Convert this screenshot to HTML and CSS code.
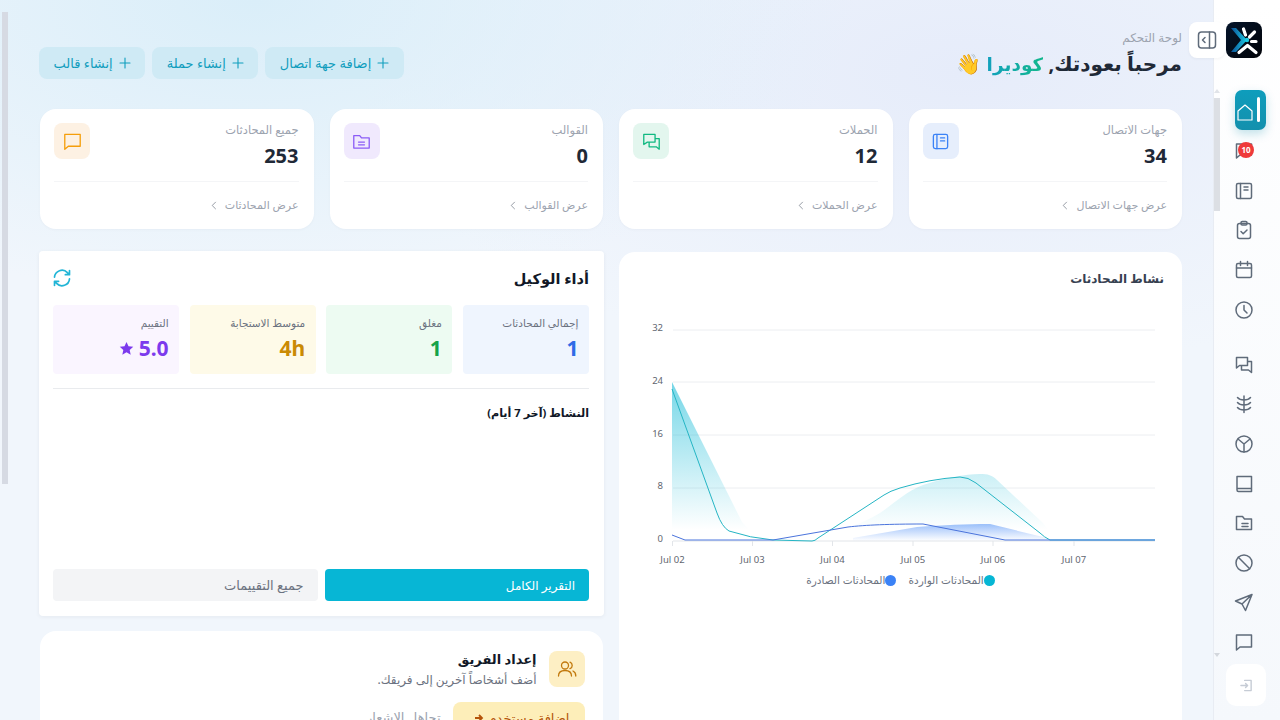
FILE: index.html
```html
<!DOCTYPE html>
<html lang="ar" dir="rtl">
<head>
    <meta charset="UTF-8">
    <meta name="viewport" content="width=device-width, initial-scale=1.0">
    <title>لوحة التحكم</title>
    <link rel="stylesheet" href="styles.css">
</head>
<body>
    <!-- Sidebar -->
    <aside class="sidebar">
        <div class="sidebar-top">
            <button class="toggle-btn" aria-label="toggle">
                <svg class="icon" viewBox="0 0 20 20"><rect x="1.500" y="2" width="17" height="16" rx="3"/><path d="M12.500 2v16M8 7.500 5.500 10 8 12.500"/></svg>
            </button>
            <div class="logo">
                <svg viewBox="0 0 36 36" width="36" height="36">
                    <defs>
                        <linearGradient id="logoBlue" x1="0" y1="0" x2="1" y2="0">
                            <stop offset="0" stop-color="#0b4f96"/>
                            <stop offset="1" stop-color="#1bcbe4"/>
                        </linearGradient>
                    </defs>
                    <path d="M5 6h5l11 12-11 12H5l10-12Z" fill="url(#logoBlue)"/>
                    <circle cx="21" cy="18" r="2.200" fill="#1bcbe4"/>
                    <path d="M17.500 7 19.500 13M28.500 10 23.500 15M30 19.500H25.500M13 30.500 21.500 23.500 30 30.500" stroke="#fff" stroke-width="3.200" stroke-linecap="round" stroke-linejoin="round" fill="none"/>
                </svg>
            </div>
        </div>

        <nav class="nav">
            <a class="nav-item active">
                <svg class="icon" viewBox="0 0 16 17"><path d="M1 7 8 1l7 6v9H1Z"/></svg>
                <span class="active-bar"></span>
            </a>
            <a class="nav-item">
                <svg class="icon" viewBox="0 0 20 20"><path d="M2.500 3h15v11H6l-3.500 3Z"/></svg>
                <span class="badge">10</span>
            </a>
            <a class="nav-item"><svg class="icon" viewBox="0 0 20 20"><rect x="2.500" y="2.500" width="15" height="15" rx="1.500"/><path d="M6.500 2.500v15M10 6h4M10 9h4"/></svg></a>
            <a class="nav-item"><svg class="icon" viewBox="0 0 20 20"><rect x="3.500" y="3.500" width="13" height="15" rx="2"/><rect x="7" y="1.500" width="6" height="3.500" rx="1.200"/><path d="m7 11.500 2.200 2.200L13 10"/></svg></a>
            <a class="nav-item"><svg class="icon" viewBox="0 0 20 20"><rect x="2.500" y="3.500" width="15" height="14" rx="1.500"/><path d="M2.500 8h15M6.500 1.500v4M13.500 1.500v4"/></svg></a>
            <a class="nav-item"><svg class="icon" viewBox="0 0 20 20"><circle cx="10" cy="10" r="8"/><path d="M10 5.500V10l3 3"/></svg></a>

            <a class="nav-item group-start"><svg class="icon" viewBox="0 0 20 20"><path d="M2.500 2.500h11v8h-8l-3 2.500ZM13.500 6.500h4v11l-3-2.500h-7v-4"/></svg></a>
            <a class="nav-item"><svg class="icon" viewBox="0 0 20 20"><path d="M10 2v16.500M3.500 3.500c1.500 1.800 4 2.500 6.500 2.500s5-.7 6.500-2.500M3.500 8.500c1.500 1.800 4 2.500 6.500 2.500s5-.7 6.500-2.500M3.500 13.500c1.500 1.800 4 2.500 6.500 2.500s5-.7 6.500-2.500"/></svg></a>
            <a class="nav-item"><svg class="icon" viewBox="0 0 20 20"><circle cx="10" cy="10" r="8"/><path d="M4 5l6 5 6-5M10 10v8"/></svg></a>
            <a class="nav-item"><svg class="icon" viewBox="0 0 20 20"><path d="M3 2.500h14.500v15H4.500A1.500 1.500 0 0 1 3 16ZM3 14.500h14.500"/></svg></a>
            <a class="nav-item"><svg class="icon" viewBox="0 0 20 20"><path d="M2.500 3.500h6l2 2.500h7v10.500h-15ZM8 10.500h6M8 13.500h6"/></svg></a>
            <a class="nav-item"><svg class="icon" viewBox="0 0 20 20"><circle cx="10" cy="10" r="8"/><path d="m4.300 4.300 11.400 11.400"/></svg></a>
            <a class="nav-item"><svg class="icon" viewBox="0 0 20 20"><path d="M18 2.500 1.500 9l6.500 3 3.500 6.500ZM8 12l10-9.500"/></svg></a>
            <a class="nav-item"><svg class="icon" viewBox="0 0 20 20"><path d="M2.500 3h15v12H6l-3.500 3Z"/></svg></a>
        </nav>

        <button class="logout-btn" aria-label="logout">
            <svg class="icon" viewBox="0 0 14 14"><path d="M5 1.500h7v11H5M1 7h7M6 4.800 8.200 7 6 9.200"/></svg>
        </button>

        <span class="side-arrow up"></span>
        <span class="side-thumb"></span>
        <span class="side-arrow down"></span>
    </aside>

    <main class="content">
        <span class="page-thumb"></span>

        <header class="page-header">
            <div class="greeting">
                <div class="crumb">لوحة التحكم</div>
                <h1>مرحباً بعودتك, <span class="name">كوديرا</span> <span class="wave">👋</span></h1>
            </div>
            <div class="quick-actions">
                <button class="quick-btn"><svg class="icon" viewBox="0 0 12 12"><path d="M6 1v10M1 6h10"/></svg>إضافة جهة اتصال</button>
                <button class="quick-btn"><svg class="icon" viewBox="0 0 12 12"><path d="M6 1v10M1 6h10"/></svg>إنشاء حملة</button>
                <button class="quick-btn"><svg class="icon" viewBox="0 0 12 12"><path d="M6 1v10M1 6h10"/></svg>إنشاء قالب</button>
            </div>
        </header>

        <section class="stats">
            <div class="stat-card">
                <div class="stat-top">
                    <div>
                        <div class="stat-label">جهات الاتصال</div>
                        <div class="stat-value">34</div>
                    </div>
                    <div class="stat-icon blue"><svg class="icon" viewBox="0 0 16 16"><rect x="2" y="2" width="12" height="12" rx="1.500"/><path d="M5 2v12M8 5h3.500M8 7.500h3.500"/></svg></div>
                </div>
                <div class="stat-foot">عرض جهات الاتصال<svg class="chev" viewBox="0 0 6 10"><path d="M5 1 1 5l4 4"/></svg></div>
            </div>
            <div class="stat-card">
                <div class="stat-top">
                    <div>
                        <div class="stat-label">الحملات</div>
                        <div class="stat-value">12</div>
                    </div>
                    <div class="stat-icon green"><svg class="icon" viewBox="0 0 16 16"><path d="M1.500 2h9.500v6.500H4.500L1.500 10.500ZM11 5.500h3.500v9l-2.500-2H6V8.500"/></svg></div>
                </div>
                <div class="stat-foot">عرض الحملات<svg class="chev" viewBox="0 0 6 10"><path d="M5 1 1 5l4 4"/></svg></div>
            </div>
            <div class="stat-card">
                <div class="stat-top">
                    <div>
                        <div class="stat-label">القوالب</div>
                        <div class="stat-value">0</div>
                    </div>
                    <div class="stat-icon purple"><svg class="icon" viewBox="0 0 16 16"><path d="M1.500 3h5l1.500 2h6.500v8.500h-13ZM5.500 8.500h5M5.500 10.800h5"/></svg></div>
                </div>
                <div class="stat-foot">عرض القوالب<svg class="chev" viewBox="0 0 6 10"><path d="M5 1 1 5l4 4"/></svg></div>
            </div>
            <div class="stat-card">
                <div class="stat-top">
                    <div>
                        <div class="stat-label">جميع المحادثات</div>
                        <div class="stat-value">253</div>
                    </div>
                    <div class="stat-icon orange"><svg class="icon" viewBox="0 0 16 16"><path d="M1.500 2h13v10H4.500L1.500 14.500Z"/></svg></div>
                </div>
                <div class="stat-foot">عرض المحادثات<svg class="chev" viewBox="0 0 6 10"><path d="M5 1 1 5l4 4"/></svg></div>
            </div>
        </section>

        <section class="lower">
            <!-- Chart -->
            <div class="chart-card">
                <h3 class="chart-title">نشاط المحادثات</h3>
                <svg class="chart" viewBox="639 320 525 250" width="525" height="250" dir="ltr">
                    <defs>
                        <linearGradient id="tealFill" gradientUnits="userSpaceOnUse" x1="0" y1="382" x2="0" y2="530">
                            <stop offset="0" stop-color="#06b6d4" stop-opacity=".55"/>
                            <stop offset="1" stop-color="#06b6d4" stop-opacity="0"/>
                        </linearGradient>
                        <linearGradient id="blueFill" gradientUnits="userSpaceOnUse" x1="0" y1="524" x2="0" y2="541">
                            <stop offset="0" stop-color="#3b82f6" stop-opacity=".5"/>
                            <stop offset="1" stop-color="#3b82f6" stop-opacity="0"/>
                        </linearGradient>
                    </defs>
                    <g class="grid">
                        <path d="M673 330H1155M673 382H1155M673 435H1155M673 488H1155"/>
                        <path class="axis" d="M673 541H1155M672.500 541v5M752.500 541v5M832.500 541v5M913 541v5M993 541v5M1074 541v5"/>
                    </g>
                    <g class="tick-y">
                        <text x="663" y="331">32</text>
                        <text x="663" y="384">24</text>
                        <text x="663" y="437">16</text>
                        <text x="663" y="489">8</text>
                        <text x="663" y="542">0</text>
                    </g>
                    <path d="M672 382 742 522 760 541H672Z" fill="url(#tealFill)"/>
                    <path d="M812 541C840 530 860 525 880 513 895 503 905 492 923 485 945 478 965 474 980 474 988 474 992 475 997 480L1043 523 1057 541Z" fill="url(#tealFill)"/>
                    <path d="M853 538 917 527C945 525 965 524 990 524L1043 537 1052 541H853Z" fill="url(#blueFill)"/>
                    <path class="line teal" d="M672 389 717 513Q722 527 729 531 750 538 773 540L812 541Q815 541 818 538L884 495Q890 491 900 488 930 479 960 477 968 477 976 483L1040 533Q1044 537 1050 540H1155"/>
                    <path class="line blue" d="M672 535 685 540 773 540 848 527C865 525 890 524 923 524L1005 540H1155"/>
                    <g class="tick-x">
                        <text x="672.500" y="563">Jul 02</text>
                        <text x="752.500" y="563">Jul 03</text>
                        <text x="832.500" y="563">Jul 04</text>
                        <text x="913" y="563">Jul 05</text>
                        <text x="993" y="563">Jul 06</text>
                        <text x="1074" y="563">Jul 07</text>
                    </g>
                </svg>
                <div class="legend">
                    <span class="legend-item"><i class="dot teal-dot"></i>المحادثات الواردة</span>
                    <span class="legend-item"><i class="dot blue-dot"></i>المحادثات الصادرة</span>
                </div>
            </div>

            <div class="side-col">
                <!-- Agent performance -->
                <div class="agent-card">
                    <div class="agent-head">
                        <h2>أداء الوكيل</h2>
                        <svg class="icon refresh" viewBox="0 0 24 24"><path d="M3 11a9 9 0 0 1 15.500-5.500L21 8M21 3v5h-5M21 13a9 9 0 0 1-15.500 5.500L3 16M3 21v-5h5"/></svg>
                    </div>
                    <div class="metrics">
                        <div class="metric m-blue"><div class="metric-label">إجمالي المحادثات</div><div class="metric-value">1</div></div>
                        <div class="metric m-green"><div class="metric-label">مغلق</div><div class="metric-value">1</div></div>
                        <div class="metric m-yellow"><div class="metric-label">متوسط الاستجابة</div><div class="metric-value">4h</div></div>
                        <div class="metric m-purple"><div class="metric-label">التقييم</div><div class="metric-value">5.0<svg class="star" viewBox="0 0 24 24"><path d="M12 1.500 15.200 8.500 22.800 9.300 17.100 14.400 18.700 22 12 18.100 5.300 22 6.900 14.400 1.200 9.300 8.800 8.500Z"/></svg></div></div>
                    </div>
                    <h4 class="activity-title">النشاط (آخر 7 أيام)</h4>
                    <div class="activity-empty"></div>
                    <div class="agent-actions">
                        <button class="btn-primary">التقرير الكامل</button>
                        <button class="btn-muted">جميع التقييمات</button>
                    </div>
                </div>

                <!-- Team setup -->
                <div class="team-card">
                    <div class="team-row">
                        <div class="team-icon"><svg class="icon" viewBox="0 0 20 20"><circle cx="8" cy="6.500" r="3.500"/><path d="M1.500 17c0-3.500 2.500-5.500 6.500-5.500s6.500 2 6.500 5.500M13 3.200a3.500 3.500 0 0 1 0 6.500M16 12c1.800.8 2.800 2.500 2.800 5"/></svg></div>
                        <div>
                            <div class="team-title">إعداد الفريق</div>
                            <div class="team-sub">أضف أشخاصاً آخرين إلى فريقك.</div>
                        </div>
                    </div>
                    <div class="team-actions">
                        <button class="btn-amber">إضافة مستخدم<svg class="arrow" viewBox="0 0 10 10"><path d="M1 5h7M5 2l3 3-3 3"/></svg></button>
                        <span class="dismiss">تجاهل الإشعار</span>
                    </div>
                </div>
            </div>
        </section>
    </main>
</body>
</html>
```

FILE: styles.css
```css
* {
    margin: 0;
    padding: 0;
    box-sizing: border-box;
    font-family: 'Noto Sans', 'DejaVu Sans', sans-serif;
}

html, body {
    height: 100%;
    overflow: hidden;
}

body {
    display: flex;
    background:
        radial-gradient(600px 300px at 20% 0%, #daeef9 0%, rgba(218, 238, 249, 0) 100%),
        radial-gradient(600px 300px at 75% 10%, #e6ecfa 0%, rgba(230, 236, 250, 0) 100%),
        #f1f6fc;
    color: #1f2937;
}

button {
    border: none;
    cursor: pointer;
}

.icon {
    width: 20px;
    height: 20px;
    fill: none;
    stroke: #5f6b7a;
    stroke-width: 1.5;
    stroke-linecap: round;
    stroke-linejoin: round;
    flex-shrink: 0;
}

/* Sidebar */
.sidebar {
    width: 67px;
    height: 720px;
    flex-shrink: 0;
    position: relative;
    direction: ltr;
    display: flex;
    flex-direction: column;
    background: linear-gradient(180deg, #ffffff 0%, #f5f8fc 100%);
    border-left: 1px solid #e8ecf3;
}

.sidebar-top {
    height: 36px;
    margin-top: 22px;
    padding-left: 12px;
}

.toggle-btn {
    position: absolute;
    top: 22px;
    left: -25px;
    width: 36px;
    height: 36px;
    border-radius: 8px;
    background: #fff;
    display: flex;
    align-items: center;
    justify-content: center;
    box-shadow: 0 1px 3px rgba(31, 41, 55, 0.05);
}

.logo {
    position: relative;
    width: 36px;
    height: 36px;
    border-radius: 8px;
    overflow: hidden;
    background: linear-gradient(135deg, #04142a 0%, #020409 100%);
}

.nav {
    margin-top: 32px;
    padding-left: 20px;
    display: flex;
    flex-direction: column;
}

.nav-item {
    position: relative;
    height: 39.6px;
    width: 32px;
    display: flex;
    align-items: center;
    justify-content: flex-start;
}

.nav-item.group-start {
    margin-top: 15.5px;
}

.nav-item.active {
    height: 40px;
    width: 31px;
    margin-left: 1px;
    margin-bottom: 1.5px;
    border-radius: 7px;
    background: linear-gradient(180deg, #0e9dbc 0%, #1390ad 100%);
    box-shadow: 0 4px 10px rgba(19, 144, 173, 0.25);
}

.nav-item.active .icon {
    width: 16px;
    height: 17px;
    margin: 4px 0 0 2px;
    stroke: #fff;
    stroke-width: 1.2;
}

.active-bar {
    position: absolute;
    left: 22px;
    top: 7px;
    width: 3px;
    height: 25px;
    border-radius: 2px;
    background: #fff;
}

.badge {
    position: absolute;
    left: 4px;
    top: 10px;
    width: 16px;
    height: 16px;
    border-radius: 50%;
    background: #ef3a3a;
    color: #fff;
    font-size: 8px;
    font-weight: 700;
    line-height: 16px;
    text-align: center;
}

.logout-btn {
    position: absolute;
    left: 12px;
    top: 664px;
    width: 40px;
    height: 42px;
    border-radius: 10px;
    background: #fff;
    display: flex;
    align-items: center;
    justify-content: center;
}

.logout-btn .icon {
    width: 13px;
    height: 13px;
    stroke: #c6ccd5;
}

.side-thumb {
    position: absolute;
    left: 0;
    top: 98px;
    width: 6px;
    height: 113px;
    background: #dcdfe4;
}

.side-arrow {
    position: absolute;
    left: 0;
    border-left: 3px solid transparent;
    border-right: 3px solid transparent;
}

.side-arrow.up {
    top: 89px;
    border-bottom: 4px solid #e1e4e9;
}

.side-arrow.down {
    top: 653px;
    border-top: 4px solid #d3d7dd;
}

/* Main */
.content {
    flex: 1;
    min-width: 0;
    height: 720px;
    position: relative;
    overflow: hidden;
    padding: 30px 31px 0 40px;
}

.page-thumb {
    position: absolute;
    left: 2px;
    top: 12px;
    width: 6px;
    height: 472px;
    background: #d6dae3;
}

.page-header {
    display: flex;
    justify-content: space-between;
    align-items: flex-start;
    height: 79px;
}

.crumb {
    font-size: 12px;
    line-height: 16px;
    color: #9ca3af;
}

.greeting h1 {
    font-size: 20px;
    line-height: 30px;
    margin-top: 3px;
    font-weight: 700;
    color: #1f2937;
}

.name {
    font-size: 18.5px;
    color: transparent;
    background: linear-gradient(90deg, #12a0bd 0%, #12b78c 100%);
    -webkit-background-clip: text;
    background-clip: text;
}

.wave {
    font-size: 20px;
}

.quick-actions {
    display: flex;
    gap: 7px;
    margin: 17px 0 0 -1px;
}

.quick-btn {
    height: 32px;
    padding: 0 14.5px;
    display: flex;
    align-items: center;
    gap: 6px;
    border-radius: 8px;
    background: #cfeaf5;
    color: #0f9dbd;
    font-size: 13px;
}

.quick-btn .icon {
    width: 12px;
    height: 12px;
    stroke: #0f9dbd;
    stroke-width: 1.1;
}

/* Stat cards */
.stats {
    display: grid;
    grid-template-columns: repeat(4, 1fr);
    gap: 16px;
}

.stat-card {
    height: 120px;
    padding: 14px 15px 14px 14px;
    background: #fff;
    border-radius: 16px;
    box-shadow: 0 1px 3px rgba(31, 41, 55, 0.03);
}

.stat-top {
    display: flex;
    justify-content: space-between;
    height: 59px;
    border-bottom: 1px solid #f4f5f7;
}

.stat-label {
    font-size: 11.5px;
    line-height: 14px;
    color: #9ca3af;
}

.stat-value {
    font-size: 20px;
    font-weight: 700;
    line-height: 26px;
    margin-top: 6px;
    color: #1f2937;
}

.stat-icon {
    width: 36px;
    height: 36px;
    border-radius: 8px;
    display: flex;
    align-items: center;
    justify-content: center;
}

.stat-icon .icon {
    width: 19px;
    height: 19px;
    stroke-width: 1.1;
}

.stat-icon.blue { background: #e6eefc; }
.stat-icon.blue .icon { stroke: #3b82f6; }
.stat-icon.green { background: #e3f6ee; }
.stat-icon.green .icon { stroke: #10b981; }
.stat-icon.purple { background: #f0e9fd; }
.stat-icon.purple .icon { stroke: #8b5cf6; }
.stat-icon.orange { background: #fdf1e3; }
.stat-icon.orange .icon { stroke: #f59e0b; }

.stat-foot {
    display: flex;
    align-items: center;
    gap: 8px;
    margin-top: 16px;
    font-size: 11px;
    line-height: 14px;
    color: #9ca3af;
}

.chev {
    width: 6px;
    height: 9px;
    fill: none;
    stroke: #8b929c;
    stroke-width: 1;
}

/* Lower grid */
.lower {
    display: grid;
    grid-template-columns: 1fr 1fr;
    gap: 16px;
    margin-top: 22px;
}

.chart-card {
    background: #fff;
    border-radius: 16px;
    padding: 18px 18px 0 18px;
    min-height: 520px;
    margin-top: 1px;
}

.chart-title {
    font-size: 12px;
    font-weight: 600;
    line-height: 18px;
    color: #374151;
}

.chart {
    display: block;
    margin: 32px 0 0 0;
}

.grid path {
    stroke: #eceef1;
    stroke-width: 1;
    fill: none;
}

.grid path.axis {
    stroke: #e2e5e9;
}

.tick-y text, .tick-x text {
    font-size: 9.5px;
    fill: #5f6670;
}

.tick-x text {
    text-anchor: middle;
}

.line {
    fill: none;
    stroke-width: 1;
}

.line.teal { stroke: #25b5c4; }
.line.blue { stroke: #4b74dc; }

.legend {
    display: flex;
    justify-content: center;
    gap: 12px;
    margin-top: 3px;
    font-size: 10.5px;
    color: #6b7280;
}

.legend-item {
    display: flex;
    align-items: center;
    line-height: 14px;
}

.dot {
    width: 11px;
    height: 11px;
    border-radius: 50%;
}

.teal-dot { background: #06b6d4; }
.blue-dot { background: #3b82f6; }

.side-col {
    display: flex;
    flex-direction: column;
    gap: 15px;
    min-width: 0;
}

.agent-card {
    height: 365px;
    margin: 0 -1px;
    padding: 14px 15px 15px 14px;
    background: #fff;
    border-radius: 4px;
    box-shadow: 0 1px 4px rgba(31, 41, 55, 0.06);
    display: flex;
    flex-direction: column;
}

.agent-head {
    display: flex;
    justify-content: space-between;
    align-items: center;
    height: 26px;
}

.agent-head h2 {
    font-size: 14.5px;
    font-weight: 700;
    color: #111827;
}

.refresh {
    width: 20px;
    height: 20px;
    margin-left: -1px;
    stroke: #22b5d6;
    stroke-width: 2;
}

.metrics {
    display: grid;
    grid-template-columns: repeat(4, 1fr);
    gap: 10.5px;
    margin-top: 14px;
    padding-bottom: 14px;
    border-bottom: 1px solid #e9ebee;
}

.metric {
    height: 69px;
    padding: 10px 10.5px 10px 11px;
    border-radius: 4px;
}

.metric-label {
    font-size: 10.5px;
    line-height: 16px;
    color: #6b7280;
}

.metric-value {
    display: flex;
    align-items: center;
    gap: 5px;
    font-size: 21px;
    font-weight: 700;
    line-height: 26px;
    margin-top: 4px;
}

.m-blue { background: #eff5fe; }
.m-blue .metric-value { color: #2f6be6; }
.m-green { background: #edfbf2; }
.m-green .metric-value { color: #16a34a; }
.m-yellow { background: #fefae8; }
.m-yellow .metric-value { color: #ca8a04; }
.m-purple { background: #faf5ff; }
.m-purple .metric-value { color: #7c3aed; }

.star {
    width: 15px;
    height: 15px;
    fill: #7c3aed;
}

.activity-title {
    font-size: 11.2px;
    font-weight: 700;
    line-height: 18px;
    margin-top: 15px;
    color: #111827;
}

.activity-empty {
    flex: 1;
}

.agent-actions {
    display: flex;
    gap: 7px;
}

.agent-actions button {
    flex: 1;
    height: 32px;
    padding: 0 14px;
    border-radius: 4px;
    text-align: right;
    font-size: 12px;
}

.btn-primary {
    background: #07b6d5;
    color: #fff;
}

.agent-actions .btn-muted {
    background: #f3f4f6;
    color: #6b7280;
    font-size: 13px;
}

.team-card {
    height: 140px;
    padding: 19px 18.5px;
    background: #fff;
    border-radius: 16px;
}

.team-row {
    display: flex;
    gap: 12px;
    margin-top: 1px;
}

.team-row > div:last-child {
    margin-top: -1px;
}

.team-icon {
    width: 36px;
    height: 36px;
    border-radius: 8px;
    background: #fdefc4;
    display: flex;
    align-items: center;
    justify-content: center;
}

.team-icon .icon {
    stroke: #c2790d;
    stroke-width: 1.3;
}

.team-title {
    font-size: 13px;
    font-weight: 700;
    line-height: 18px;
    color: #111827;
}

.team-sub {
    font-size: 12px;
    line-height: 18px;
    margin-top: 3px;
    color: #6b7280;
}

.team-actions {
    display: flex;
    align-items: flex-start;
    gap: 12px;
    margin-top: 13px;
}

.btn-amber {
    width: 132px;
    height: 36px;
    padding: 0 15px 5px;
    display: flex;
    align-items: center;
    justify-content: space-between;
    border-radius: 8px;
    background: #fdeeb9;
    color: #b45309;
    font-size: 13px;
}

.arrow {
    width: 10px;
    height: 10px;
    margin-left: 6px;
    fill: none;
    stroke: #b45309;
    stroke-width: 1.8;
}

.dismiss {
    font-size: 13px;
    line-height: 18px;
    margin-top: 6px;
    color: #9ca3af;
}
```
